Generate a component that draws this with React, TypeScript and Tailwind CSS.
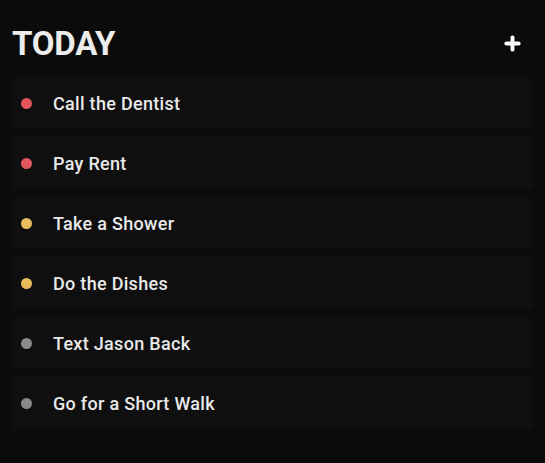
import { Plus } from 'lucide-react';

type Task = { id: number; title: string; color: string };

const tasks: Task[] = [
  { id: 1, title: 'Call the Dentist', color: 'bg-[#e2575c]' },
  { id: 2, title: 'Pay Rent', color: 'bg-[#e2575c]' },
  { id: 3, title: 'Take a Shower', color: 'bg-[#eabd5c]' },
  { id: 4, title: 'Do the Dishes', color: 'bg-[#eabd5c]' },
  { id: 5, title: 'Text Jason Back', color: 'bg-[#8a8a8a]' },
  { id: 6, title: 'Go for a Short Walk', color: 'bg-[#8a8a8a]' },
];

export default function App() {
  return (
    <div
      className="min-h-[463px] w-full bg-[#0b0b0b] px-3 pt-[24px]"
      style={{ fontFamily: 'Roboto, "Liberation Sans", sans-serif' }}
    >
      <div className="flex items-center justify-between h-[38px]">
        <h1 className="text-[33px] font-bold tracking-[-0.2px] text-[#ececec] leading-none">TODAY</h1>
        <button className="mr-[10px] text-white">
          <Plus className="w-[21px] h-[21px]" strokeWidth={4.5} />
        </button>
      </div>

      <ul className="mt-[15px] flex flex-col gap-[8px]">
        {tasks.map((task) => (
          <li
            key={task.id}
            className="flex items-center h-[52px] rounded-sm bg-[#0f0f0f] pl-[9px]"
          >
            <span className={`w-[11px] h-[11px] rounded-full ${task.color}`} />
            <span className="ml-[21px] pt-[1px] text-[18px] font-medium tracking-[0.3px] text-[#e9e9e9]">
              {task.title}
            </span>
          </li>
        ))}
      </ul>
    </div>
  );
}
